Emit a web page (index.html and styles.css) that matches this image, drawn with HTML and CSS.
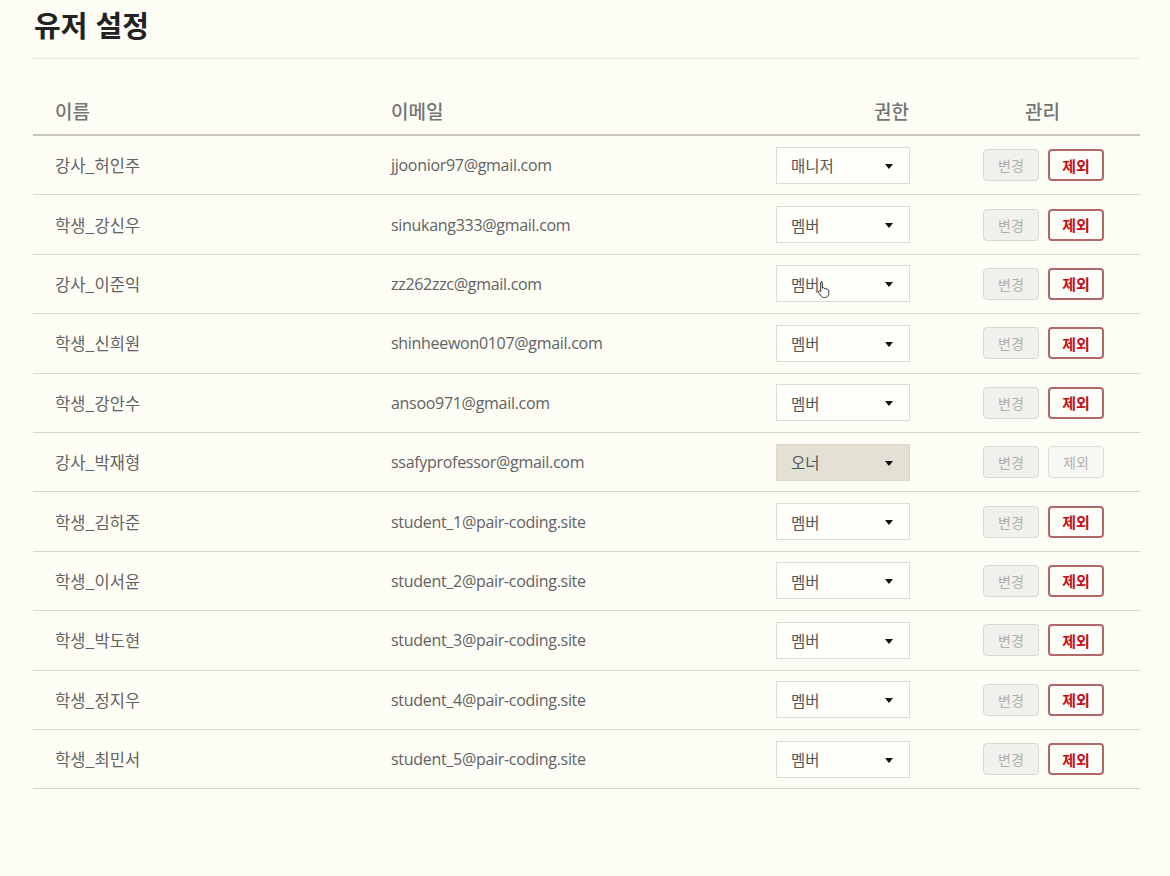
FILE: index.html
```html
<!DOCTYPE html>
<html lang="ko">
<head>
<meta charset="utf-8">
<link rel="stylesheet" href="styles.css">
</head>
<body>
<div class="page">
  <h1 class="title">유저 설정</h1>
  <div class="table">
    <div class="row head">
      <div class="c-name">이름</div>
      <div class="c-email">이메일</div>
      <div class="c-role">권한</div>
      <div class="c-manage">관리</div>
    </div>
    <div class="row"><div class="c-name">강사_허인주</div><div class="c-email">jjoonior97@gmail.com</div><div class="c-role"><div class="select">매니저<span class="arrow"></span></div></div><div class="c-manage"><span class="btn off">변경</span><span class="btn del">제외</span></div></div>
    <div class="row"><div class="c-name">학생_강신우</div><div class="c-email">sinukang333@gmail.com</div><div class="c-role"><div class="select">멤버<span class="arrow"></span></div></div><div class="c-manage"><span class="btn off">변경</span><span class="btn del">제외</span></div></div>
    <div class="row"><div class="c-name">강사_이준익</div><div class="c-email">zz262zzc@gmail.com</div><div class="c-role"><div class="select">멤버<span class="arrow"></span><svg class="cursor" width="14" height="18" viewBox="0 0 14 18"><path d="M4 1.5c.8 0 1.3.6 1.3 1.3v5.4c.3-.5 1-.7 1.5-.5.5.2.8.6.8 1.1.3-.4.9-.6 1.4-.4.5.2.8.6.8 1.1.4-.3 1-.3 1.4 0 .4.3.6.8.6 1.3v2.800c0 2.2-1.8 4-4 4H7.4c-1.3 0-2.4-.6-3.2-1.6L1.6 12.6c-.4-.5-.3-1.2.2-1.6.5-.4 1.2-.3 1.6.2l.3.4V2.8c0-.7.5-1.3 1.3-1.3z" fill="#fff" stroke="#333" stroke-width="1"/></svg></div></div><div class="c-manage"><span class="btn off">변경</span><span class="btn del">제외</span></div></div>
    <div class="row"><div class="c-name">학생_신희원</div><div class="c-email">shinheewon0107@gmail.com</div><div class="c-role"><div class="select">멤버<span class="arrow"></span></div></div><div class="c-manage"><span class="btn off">변경</span><span class="btn del">제외</span></div></div>
    <div class="row"><div class="c-name">학생_강안수</div><div class="c-email">ansoo971@gmail.com</div><div class="c-role"><div class="select">멤버<span class="arrow"></span></div></div><div class="c-manage"><span class="btn off">변경</span><span class="btn del">제외</span></div></div>
    <div class="row"><div class="c-name">강사_박재형</div><div class="c-email">ssafyprofessor@gmail.com</div><div class="c-role"><div class="select disabled">오너<span class="arrow"></span></div></div><div class="c-manage"><span class="btn off">변경</span><span class="btn off2">제외</span></div></div>
    <div class="row"><div class="c-name">학생_김하준</div><div class="c-email">student_1@pair-coding.site</div><div class="c-role"><div class="select">멤버<span class="arrow"></span></div></div><div class="c-manage"><span class="btn off">변경</span><span class="btn del">제외</span></div></div>
    <div class="row"><div class="c-name">학생_이서윤</div><div class="c-email">student_2@pair-coding.site</div><div class="c-role"><div class="select">멤버<span class="arrow"></span></div></div><div class="c-manage"><span class="btn off">변경</span><span class="btn del">제외</span></div></div>
    <div class="row"><div class="c-name">학생_박도현</div><div class="c-email">student_3@pair-coding.site</div><div class="c-role"><div class="select">멤버<span class="arrow"></span></div></div><div class="c-manage"><span class="btn off">변경</span><span class="btn del">제외</span></div></div>
    <div class="row"><div class="c-name">학생_정지우</div><div class="c-email">student_4@pair-coding.site</div><div class="c-role"><div class="select">멤버<span class="arrow"></span></div></div><div class="c-manage"><span class="btn off">변경</span><span class="btn del">제외</span></div></div>
    <div class="row"><div class="c-name">학생_최민서</div><div class="c-email">student_5@pair-coding.site</div><div class="c-role"><div class="select">멤버<span class="arrow"></span></div></div><div class="c-manage"><span class="btn off">변경</span><span class="btn del">제외</span></div></div>
  </div>
</div>
</body>
</html>
```
FILE: styles.css
```css
* { box-sizing: border-box; }
html, body { margin: 0; padding: 0; }
body {
  background: #fdfdf6;
  font-family: "Noto Sans CJK KR", "Noto Sans", sans-serif;
  color: #626262;
}
.page {
  width: 1107px;
  margin-left: 33px;
}
.title {
  margin: 0;
  height: 59px;
  padding-top: 5px;
  padding-left: 1px;
  font-size: 29px;
  line-height: 38px;
  font-weight: 700;
  color: #222;
  border-bottom: 1px solid #ebe9dd;
}
.row {
  display: grid;
  grid-template-columns: 336px 385px 200px 1fr;
  align-items: center;
  height: 59.4px;
  border-bottom: 1px solid #d8d6c8;
  font-size: 16.5px;
}
.row.head {
  height: 77px;
  align-items: end;
  padding-bottom: 10px;
  border-bottom: 2px solid #c9c7b8;
  font-size: 19px;
  line-height: 26px;
  font-weight: 500;
  color: #747474;
}
.c-name { padding-left: 22px; }
.c-email {
  padding-left: 22px;
  font-family: "Open Sans", "Noto Sans", sans-serif;
  font-size: 16px;
  letter-spacing: -0.3px;
}
.head .c-email { font-family: "Noto Sans CJK KR", sans-serif; letter-spacing: 0; font-size: 19px; }
.c-role { padding-left: 22px; }
.head .c-role { padding-left: 120px; }
.c-manage {
  display: flex;
  gap: 9px;
  padding-left: 29px;
}
.head .c-manage { padding-left: 71px; }
.select {
  position: relative;
  width: 134px;
  height: 37px;
  border: 1px solid #dcdcd6;
  background: #fefefb;
  display: flex;
  align-items: center;
  padding-left: 14px;
  font-size: 15.5px;
  color: #555;
}
.select.disabled {
  background: #e2e1d4;
  border-color: #dcdacc;
}
.arrow {
  position: absolute;
  right: 16px;
  top: 16px;
  width: 0;
  height: 0;
  border-left: 4px solid transparent;
  border-right: 4px solid transparent;
  border-top: 5px solid #111;
}
.cursor {
  position: absolute;
  left: 40px;
  top: 14px;
}
.btn {
  display: inline-flex;
  align-items: center;
  justify-content: center;
  width: 56px;
  height: 32px;
  border-radius: 4px;
  font-size: 14px;
}
.btn.off {
  background: #f0f0ec;
  border: 1px solid #d8d8d4;
  color: #b0b0b0;
}
.btn.off2 {
  background: #f7f7f3;
  border: 1px solid #dcdcd8;
  color: #b0b0b0;
}
.btn.del {
  background: #fefef8;
  border: 2px solid #b06868;
  color: #c40f1f;
  font-weight: 700;
  font-size: 15px;
}
```
